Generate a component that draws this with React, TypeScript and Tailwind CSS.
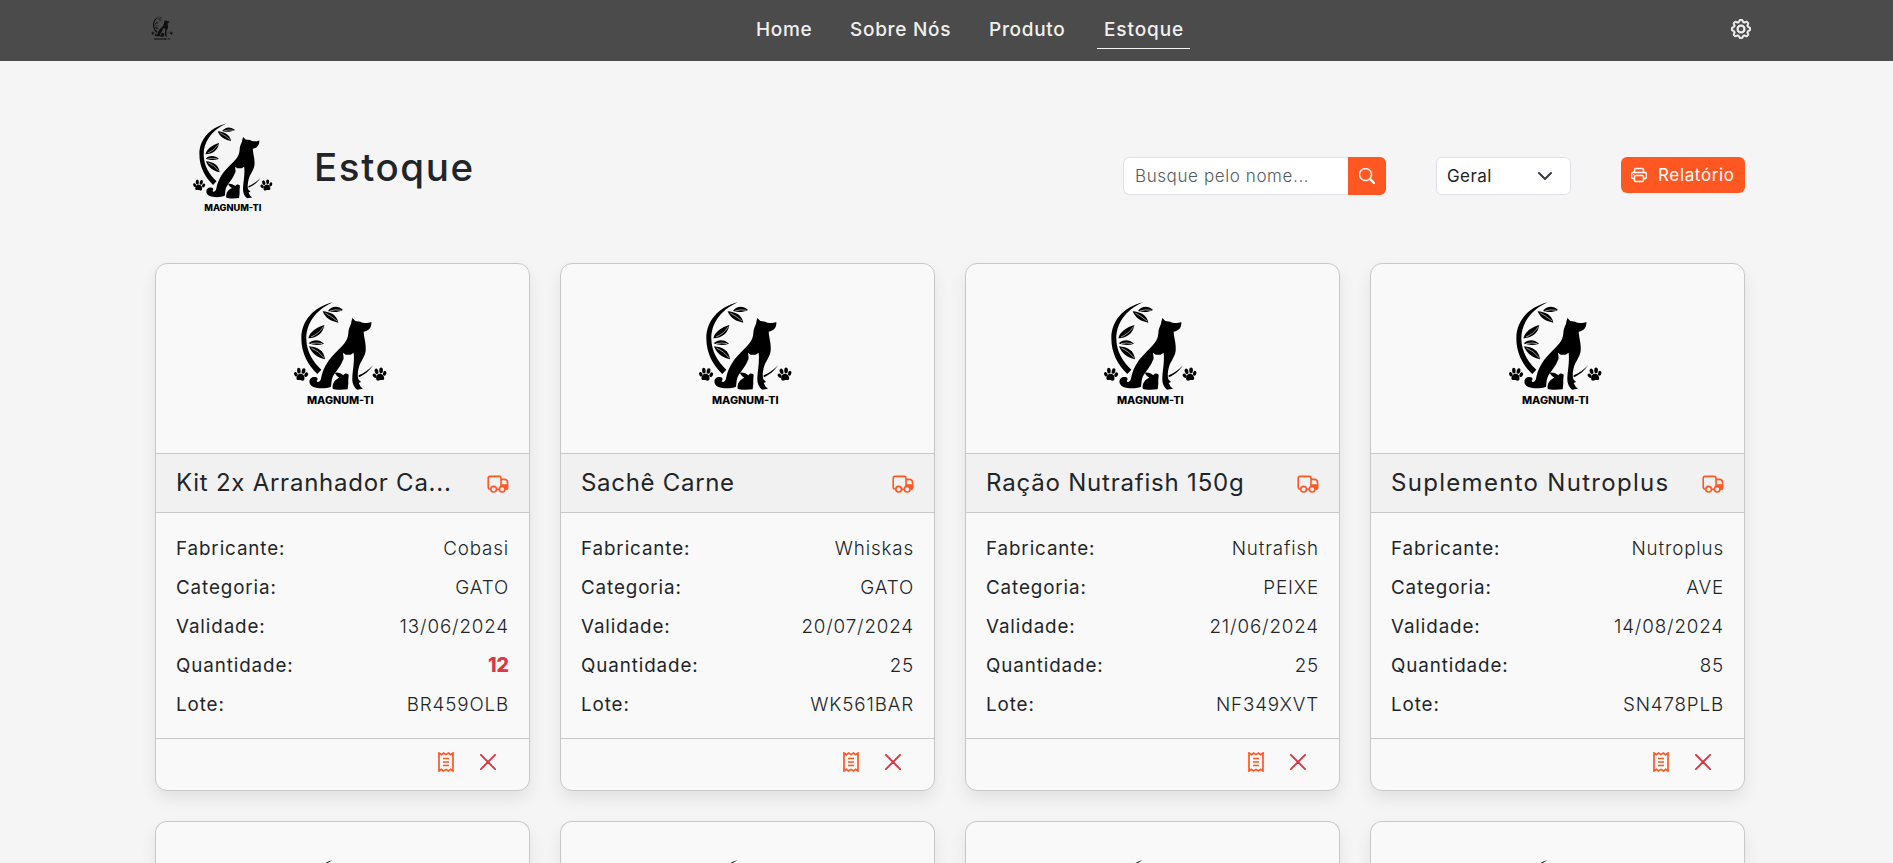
import { BsGear, BsPrinter, BsSearch } from "react-icons/bs";

type Product = {
  name: string;
  titleSpacing: string;
  maker: string;
  category: string;
  expiry: string;
  quantity: number;
  lot: string;
};

const products: Product[] = [
  { name: "Kit 2x Arranhador Ca...", titleSpacing: "tracking-[0.75px]", maker: "Cobasi", category: "GATO", expiry: "13/06/2024", quantity: 12, lot: "BR459OLB" },
  { name: "Sachê Carne", titleSpacing: "tracking-[0.7px]", maker: "Whiskas", category: "GATO", expiry: "20/07/2024", quantity: 25, lot: "WK561BAR" },
  { name: "Ração Nutrafish 150g", titleSpacing: "tracking-[0.8px]", maker: "Nutrafish", category: "PEIXE", expiry: "21/06/2024", quantity: 25, lot: "NF349XVT" },
  { name: "Suplemento Nutroplus", titleSpacing: "tracking-[1.3px]", maker: "Nutroplus", category: "AVE", expiry: "14/08/2024", quantity: 85, lot: "SN478PLB" },
];

function Paw({ x, y, turn }: { x: number; y: number; turn: number }) {
  return (
    <g transform={`translate(${x} ${y}) rotate(${turn})`}>
      <path d="M0 -3C8 -3 13 5 12 13C10 20 5 16 0 16C-5 16 -10 20 -12 13C-13 5 -8 -3 0 -3Z" />
      <ellipse cx="-15.5" cy="1" rx="5" ry="7" transform="rotate(-35 -15.5 1)" />
      <ellipse cx="-8" cy="-11" rx="5.5" ry="8.5" transform="rotate(-12 -8 -11)" />
      <ellipse cx="6" cy="-12" rx="5.5" ry="8.5" transform="rotate(8 6 -12)" />
      <ellipse cx="15.5" cy="-2" rx="5" ry="7.5" transform="rotate(25 15.5 -2)" />
    </g>
  );
}

function Logo({ className }: { className: string }) {
  return (
    <svg viewBox="0 0 360 375" className={className} fill="#000">
      <path d="M158 37C100 52 64 93 64 145C64 190 84 226 112 252L124 239C98 215 80 185 79 148C78 105 103 62 158 37Z" />
      <path d="M144 63C155 48 174 46 189 60C173 68 158 67 144 63Z" />
      <path d="M128 64C150 66 170 73 175 98C155 95 136 85 128 64Z" />
      <path d="M85 145C90 124 110 112 133 105C129 130 112 143 85 145Z" />
      <path d="M86 160C100 147 119 149 132 161C115 167 100 165 86 160Z" />
      <path d="M87 169C112 171 132 181 135 208C111 202 95 191 87 169Z" />
      <g stroke="#f9f9f9" strokeWidth="1.8" fill="none">
        <path d="M150 63Q168 57 184 61" />
        <path d="M136 69Q153 78 171 93" />
        <path d="M93 141Q116 132 130 110" />
        <path d="M93 161Q110 157 127 161" />
        <path d="M94 174Q115 182 132 203" />
      </g>
      <path d="M217 84L226 93L241 95C252 102 264 99 274 96C275 112 268 122 251 125C252 145 259 160 257 182C255 200 243 212 237 230C233 245 232 258 235 268L243 276L236 279L242 290L249 296L231 299C221 290 216 280 217 262C218 240 224 215 221 188L212 194H197L189 188C190 200 193 205 188 212C180 235 158 250 155 272L153 290C140 296 115 297 100 291C86 285 84 268 97 262C110 258 117 266 110 273C112 278 120 276 123 266C128 240 140 215 163 192C190 165 203 155 205 130C206 110 214 105 214 95Z" />
      <path d="M165 248C175 247 185 251 190 256C195 249 200 250 206 254C206 262 204 270 205 280L203 298C185 300 165 300 158 296C156 280 165 268 178 263C170 258 166 253 165 248Z" />
      <path d="M236 256C252 250 268 238 279 226C268 243 252 256 236 262Z" />
      <Paw x={63} y={254} turn={8} />
      <Paw x={299} y={254} turn={-8} />
      <text x="81" y="342" textLength="200" lengthAdjust="spacingAndGlyphs" fontSize="29" fontWeight="800" fontFamily="Inter, sans-serif">
        MAGNUM-TI
      </text>
    </svg>
  );
}

function TruckIcon() {
  return (
    <svg viewBox="0 0 22 18" className="mt-0.5 h-[18px] w-[22px] shrink-0" fill="none" stroke="#ff5722" strokeWidth="1.6">
      <path d="M3 14.2C1.8 14 1.2 13.4 1.2 12.2V3C1.2 2 1.8 1.4 2.8 1.4H12.4C13.4 1.4 14 2 14 3V13.6M9.8 14.4H12M14 4.4H17.4C19.4 4.4 20.6 6.2 20.6 8.2V12.4C20.6 13.6 20 14.2 18.8 14.2" />
      <path d="M14 9.2H20.6V12.6C20.6 13.6 20 14.2 18.8 14.2H18.4A2.9 2.9 0 0 0 14 12Z" fill="#ff5722" stroke="none" />
      <circle cx="6.6" cy="14.2" r="2.8" />
      <circle cx="15.2" cy="14.2" r="2.8" fill="#f1f1f1" />
    </svg>
  );
}

function ReceiptIcon() {
  return (
    <svg viewBox="0 0 16 20" className="h-5 w-4" fill="none" stroke="#ff5722" strokeWidth="1.7">
      <path d="M1 1L3.3 2.6L5.6 1L8 2.6L10.4 1L12.7 2.6L15 1V19L12.7 17.4L10.4 19L8 17.4L5.6 19L3.3 17.4L1 19Z" />
      <path d="M5 6.4H11M5 10H11M5 13.6H11" strokeWidth="1.5" />
    </svg>
  );
}

function Row({ label, value, low = false }: { label: string; value: string | number; low?: boolean }) {
  return (
    <div className="flex h-[38.9px] items-center justify-between text-[18.8px]">
      <span className="tracking-[0.9px]">{label}</span>
      <span className={low ? "text-[19.5px] font-extrabold text-[#dc3545]" : "font-light tracking-[0.85px]"}>{value}</span>
    </div>
  );
}

function ProductCard({ product }: { product: Product }) {
  return (
    <article className="h-[528px] overflow-hidden rounded-xl border border-[#c8c8c8] bg-[#f9f9f9] shadow-[0_8px_16px_rgba(0,0,0,0.08)]">
      <div className="h-[189px] pt-[26px] pl-[124px]">
        <Logo className="h-[125px] w-[120px]" />
      </div>
      <div className="flex h-[60px] items-center justify-between border-y border-[#c8c8c8] bg-[#f1f1f1] px-5">
        <h2 className={`text-[24px] whitespace-nowrap ${product.titleSpacing}`}>{product.name}</h2>
        <TruckIcon />
      </div>
      <div className="h-[225px] px-5 pt-[17px]">
        <Row label="Fabricante:" value={product.maker} />
        <Row label="Categoria:" value={product.category} />
        <Row label="Validade:" value={product.expiry} />
        <Row label="Quantidade:" value={product.quantity} low={product.quantity < 20} />
        <Row label="Lote:" value={product.lot} />
      </div>
      <div className="flex h-[52px] items-center justify-end gap-[26px] border-t border-[#c8c8c8] pr-[33px] pb-[5px]">
        <ReceiptIcon />
        <svg viewBox="0 0 16 16" className="h-4 w-4" stroke="#dc3545" strokeWidth="1.9" strokeLinecap="round">
          <path d="M.9 .9L15.1 15.1M15.1 .9L.9 15.1" />
        </svg>
      </div>
    </article>
  );
}

function CardTop() {
  return (
    <article className="h-[43px] overflow-hidden rounded-t-xl border border-b-0 border-[#c8c8c8] bg-[#f9f9f9] pt-[26px] pl-[124px] shadow-[0_8px_16px_rgba(0,0,0,0.08)]">
      <svg viewBox="0 0 360 48" className="h-4 w-[120px]" fill="#000">
        <path d="M158 37C150 39 142 42 135 46L131 48H138C145 44 151 40 158 37Z" />
      </svg>
    </article>
  );
}

export default function App() {
  return (
    <div className="h-[863px] overflow-hidden bg-[#f5f5f5] font-['Inter',sans-serif] text-[#212529]">
      <header className="flex h-[61px] items-start bg-[#4b4b4b] pl-[148px]">
        <Logo className="mt-[13px] h-[30px] w-7 opacity-80" />
        <nav className="ml-[573px] flex items-start text-[19px] font-medium tracking-[0.7px] text-[#f0f0f0]">
          <a className="mt-4 ml-[7px] w-[94px] leading-7">Home</a>
          <a className="mt-4 w-[139px] leading-7 whitespace-nowrap">Sobre Nós</a>
          <a className="mt-4 w-[108px] leading-7">Produto</a>
          <a className="h-[49px] w-[93px] border-b border-[#f5f5f5] pt-4 pl-[7px] leading-7 tracking-[0.9px]">Estoque</a>
        </nav>
        <BsGear className="mt-[19px] ml-[541px] h-5 w-5 text-[#f5f5f5]" stroke="currentColor" strokeWidth="0.7" />
      </header>

      <main className="pr-[148px] pl-[155px]">
        <section className="flex h-[202px] items-start">
          <Logo className="mt-[52px] ml-[26px] h-[107px] w-[103px]" />
          <h1 className="mt-[78px] ml-[30px] w-[809px] text-[38.5px] leading-[56px] font-medium tracking-[1.6px]">Estoque</h1>
          <div className="mt-24 flex h-[38px] w-[263px] shrink-0">
            <div className="flex w-[225px] items-center rounded-l-md border border-r-0 border-[#dee2e6] bg-white pt-0.5 pl-[11px] text-[17px] font-light tracking-[0.6px] text-[#555c63]">
              Busque pelo nome...
            </div>
            <button className="flex w-[38px] items-center justify-center rounded-r-md bg-[#ff5722] text-white">
              <BsSearch className="h-4 w-4" stroke="currentColor" strokeWidth="0.5" />
            </button>
          </div>
          <div className="mt-24 ml-[50px] flex h-[38px] w-[135px] shrink-0 items-center justify-between rounded-md border border-[#dee2e6] bg-white pr-[17px] pl-[10px] text-[17px] tracking-[0.4px]">
            <span className="pt-0.5">Geral</span>
            <svg viewBox="0 0 16 16" className="h-4 w-4" fill="none" stroke="#343a40" strokeWidth="2" strokeLinecap="round" strokeLinejoin="round">
              <path d="m2 5 6 6 6-6" />
            </svg>
          </div>
          <button className="mt-24 ml-[50px] flex h-9 w-[124px] shrink-0 items-center gap-[11px] rounded-md bg-[#ff5722] pl-[10px] text-[17px] tracking-[0.65px] text-white">
            <BsPrinter className="h-4 w-4" stroke="currentColor" strokeWidth="0.5" />
            <span className="pt-0.5">Relatório</span>
          </button>
        </section>

        <section className="grid grid-cols-[repeat(4,375px)] gap-[30px]">
          {products.map((p) => (
            <ProductCard key={p.lot} product={p} />
          ))}
          {products.map((p) => (
            <CardTop key={`${p.lot}-next`} />
          ))}
        </section>
      </main>
    </div>
  );
}
